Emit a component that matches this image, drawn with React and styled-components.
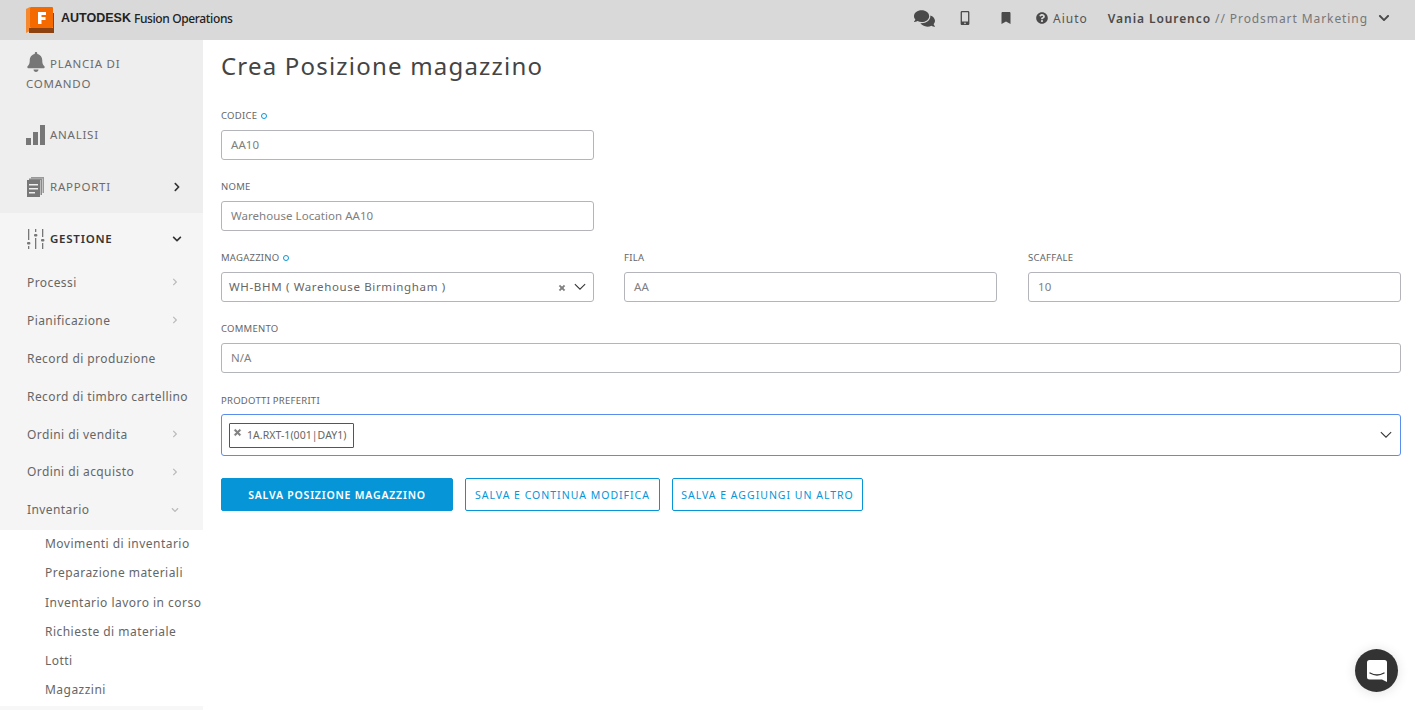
import React from 'react';
import styled, { createGlobalStyle } from 'styled-components';
import { FaBell, FaComments, FaMobileAlt, FaBookmark, FaQuestionCircle, FaChevronRight, FaChevronDown, FaTimes } from 'react-icons/fa';

const GlobalStyle = createGlobalStyle`
  html, body { margin: 0; height: 100%; overflow: hidden; background: #fff; }
  * { box-sizing: border-box; }
  body { font-family: "Noto Sans", "Open Sans", sans-serif; color: #666; }
`;

const Page = styled.div`
  height: 710px;
  display: flex;
  flex-direction: column;
  position: relative;
  overflow: hidden;
`;

const Header = styled.header`
  height: 40px;
  flex: none;
  background: #d9d9d9;
  display: flex;
  align-items: center;
  padding: 0 25px 4px 26px;
`;

const Brand = styled.div`
  display: flex;
  align-items: center;
  gap: 7px;
  color: #222;
  white-space: nowrap;
  flex: 1;
  svg { margin-top: 4px; }
`;

const BrandBold = styled.span`
  font-family: "Liberation Sans", sans-serif;
  font-size: 12.5px;
  font-weight: 700;
`;

const BrandLight = styled.span`
  font-size: 12px;
  font-weight: 500;
  margin-left: -4px;
  letter-spacing: -0.37px;
`;

const TopIcon = styled.span`
  display: flex;
  color: #4a4a4a;
  font-size: ${(p) => p.$size || 14}px;
  margin-right: ${(p) => p.$gap || 0}px;
`;

const Help = styled.span`
  display: flex;
  align-items: center;
  gap: 5px;
  font-size: 12px;
  letter-spacing: 1px;
  color: #555;
  margin-right: 20px;
`;

const User = styled.span`
  font-size: 12px;
  letter-spacing: 0.92px;
  color: #777;
  margin-right: 10px;
  b { color: #4a4a4a; font-weight: 600; }
`;

const Body = styled.div`
  flex: 1;
  display: flex;
  min-height: 0;
`;

const Sidebar = styled.nav`
  width: 203px;
  flex: none;
  display: flex;
  flex-direction: column;
  background: #f7f7f7;
`;

const TopItem = styled.div`
  height: ${(p) => p.$height}px;
  background: ${(p) => (p.$open ? '#f5f5f5' : '#eeeeee')};
  display: flex;
  align-items: center;
  padding: 0 21px 0 26px;
  gap: 4px;
  font-size: 11.5px;
  letter-spacing: 0.75px;
  color: ${(p) => (p.$open ? '#333' : '#6b6b6b')};
  font-weight: ${(p) => (p.$open ? 600 : 400)};
  svg { flex: none; }
`;

const Grow = styled.span`
  flex: 1;
`;

const Plancia = styled.div`
  height: 69px;
  background: #eeeeee;
  padding: 12px 26px 0;
  font-size: 11.5px;
  line-height: 20px;
  letter-spacing: 0.75px;
  color: #6b6b6b;
  svg { vertical-align: -4px; margin-right: 4px; color: #777; }
`;

const Arrow = styled.span`
  display: flex;
  font-size: ${(p) => p.$size || 10}px;
  color: ${(p) => p.$color || '#333'};
`;

const SubItem = styled.div`
  height: ${(p) => p.$height || 38}px;
  flex: none;
  background: #f5f5f5;
  display: flex;
  align-items: center;
  padding: 0 24px 2px 27px;
  font-size: 12px;
  letter-spacing: 0.42px;
  color: #666;
  white-space: nowrap;
`;

const LeafList = styled.div`
  display: flex;
  flex-direction: column;
  padding-left: 45px;
  background: #fff;
`;

const Leaf = styled.div`
  height: 29.3px;
  line-height: 27.3px;
  font-size: 12px;
  letter-spacing: 0.47px;
  color: #666;
  white-space: nowrap;
`;

const Main = styled.main`
  flex: 1;
  padding: 0 14px 0 18px;
`;

const Title = styled.h1`
  margin: 0;
  height: 68px;
  padding-top: 8px;
  font-size: 24px;
  line-height: 36px;
  font-weight: 400;
  letter-spacing: 1.2px;
  color: #444;
`;

const Row = styled.div`
  display: grid;
  grid-template-columns: ${(p) => (p.$cols === 3 ? '403px 404px 373px' : p.$cols === 'one' ? '373px' : '1fr')};
  & > * { max-width: ${(p) => (p.$cols === 3 ? '373px' : 'none')}; }
`;

const Field = styled.div`
  display: flex;
  flex-direction: column;
  margin-bottom: ${(p) => p.$gap || 19}px;
`;

const Label = styled.label`
  height: 22px;
  line-height: 15px;
  font-size: 9.5px;
  color: #666;
  letter-spacing: 0.25px;
  display: flex;
  gap: 4px;
  align-items: flex-start;
`;

const Required = styled.i`
  width: 6px;
  height: 6px;
  margin-top: 5px;
  border: 1.5px solid #0696d7;
  border-radius: 50%;
`;

const Input = styled.div`
  height: 30px;
  border: 1px solid #b4b4bb;
  border-radius: 3px;
  display: flex;
  align-items: center;
  padding: 0 9px 2px;
  font-size: 11.5px;
  letter-spacing: 0.05px;
  color: #808080;
  background: #fff;
`;

const SelectBox = styled(Input)`
  padding: 0 7px 2px 7px;
  letter-spacing: 0.65px;
  color: #666;
`;

const Clear = styled.span`
  display: flex;
  font-size: 8px;
  color: #808080;
  margin: 4px 8px 0 0;
  svg { stroke: #808080; stroke-width: 40; }
`;

const CaretSlot = styled.span`
  display: flex;
  margin-top: 2px;
`;

const MultiBox = styled.div`
  height: 42px;
  border: 1px solid #5b8def;
  border-radius: 3px;
  display: flex;
  align-items: center;
  justify-content: space-between;
  padding: 0 8px 0 7px;
  margin-top: -1px;
`;

const Tag = styled.span`
  height: 25px;
  border: 1px solid #555;
  border-radius: 1px;
  display: flex;
  align-items: center;
  padding: 0 6px 0 3px;
  gap: 5px;
  font-size: 10.5px;
  letter-spacing: 0.05px;
  color: #666;
  svg { margin-top: -6px; font-size: 9px; color: #808080; stroke: #808080; stroke-width: 40; }
`;

const Actions = styled.div`
  display: flex;
  gap: 12px;
  margin-top: 3px;
`;

const Button = styled.button`
  height: 33px;
  width: ${(p) => p.$width}px;
  padding: 0;
  border: 1px solid #0696d7;
  border-radius: 2px;
  background: ${(p) => (p.$primary ? '#0696d7' : '#fff')};
  color: ${(p) => (p.$primary ? '#fff' : '#0696d7')};
  font-family: inherit;
  font-size: 10.5px;
  font-weight: ${(p) => (p.$primary ? 600 : 400)};
  letter-spacing: ${(p) => (p.$primary ? 0.8 : 1)}px;
  white-space: nowrap;
`;

const Chat = styled.div`
  position: absolute;
  right: 17px;
  bottom: 18px;
  width: 43px;
  height: 43px;
  border-radius: 50%;
  background: #333;
  display: flex;
  align-items: center;
  justify-content: center;
  box-shadow: 0 1px 12px rgba(0, 0, 0, 0.12);
`;

const Logo = () => (
  <svg width="28" height="27" viewBox="0 0 28 27">
    <path d="M0 2 L4 0 L4 24 L0 26 Z" fill="#f4892f" />
    <path d="M3 21 H27 V6 H28 V26 H3 Z" fill="#8f4211" />
    <rect x="4" y="0" width="23" height="21" rx="1" fill="#f56a00" />
    <path d="M12 5 H20 V8 H15.5 V10 H19.5 V13 H15.5 V17 H12 Z" fill="#fff" />
  </svg>
);

const BarsIcon = () => (
  <svg width="20" height="20" viewBox="0 0 20 20" fill="#777">
    <rect x="0" y="13" width="5" height="7" />
    <rect x="7" y="7" width="5" height="13" />
    <rect x="14" y="0" width="5" height="20" />
  </svg>
);

const ReportIcon = () => (
  <svg width="20" height="20" viewBox="0 0 20 20">
    <path d="M5 0 H18 V16 H16.5 V1.5 H5 Z" fill="#999" />
    <path d="M3 1.5 H16 V18 H14.5 V3 H3 Z" fill="#8a8a8a" />
    <rect x="1" y="3" width="13" height="17" fill="#777" />
    <rect x="3" y="7" width="9" height="1.5" fill="#eee" />
    <rect x="3" y="11" width="9" height="1.5" fill="#eee" />
    <rect x="3" y="15" width="6" height="1.5" fill="#eee" />
  </svg>
);

const SlidersIcon = () => (
  <svg width="20" height="20" viewBox="0 0 20 20" fill="#777">
    <rect x="2" y="0" width="1.3" height="11" />
    <rect x="1" y="13" width="3.4" height="2.4" rx="1" />
    <rect x="2" y="17" width="1.3" height="3" />
    <rect x="9" y="0" width="1.3" height="3" />
    <rect x="8" y="5" width="3.4" height="2.4" rx="1" />
    <rect x="9" y="9" width="1.3" height="11" />
    <rect x="16" y="0" width="1.3" height="8" />
    <rect x="15" y="10" width="3.4" height="2.4" rx="1" />
    <rect x="16" y="14" width="1.3" height="6" />
  </svg>
);

const Caret = ({ size = 12 }) => (
  <svg width={size} height={size * 0.6} viewBox="0 0 14 8" fill="none" stroke="#333" strokeWidth="1.2">
    <path d="M1 1 L7 7 L13 1" />
  </svg>
);

const ChatIcon = () => (
  <svg width="20" height="22" viewBox="0 0 20 22">
    <path d="M2.5 0 H17.5 A2.5 2.5 0 0 1 20 2.5 V22 L15 19.5 H2.5 A2.5 2.5 0 0 1 0 17 V2.5 A2.5 2.5 0 0 1 2.5 0 Z" fill="#fff" />
    <path d="M3 13 Q10 17 17 13" fill="none" stroke="#333" strokeWidth="1.4" strokeLinecap="round" />
  </svg>
);

const subItems = [
  { label: 'Processi', arrow: true },
  { label: 'Pianificazione', arrow: true },
  { label: 'Record di produzione' },
  { label: 'Record di timbro cartellino' },
  { label: 'Ordini di vendita', arrow: true },
  { label: 'Ordini di acquisto', arrow: true, height: 37 },
];

const leaves = ['Movimenti di inventario', 'Preparazione materiali', 'Inventario lavoro in corso', 'Richieste di materiale', 'Lotti', 'Magazzini'];

export default function App() {
  return (
    <Page>
      <GlobalStyle />
      <Header>
        <Brand>
          <Logo />
          <BrandBold>AUTODESK</BrandBold>
          <BrandLight>Fusion Operations</BrandLight>
        </Brand>
        <TopIcon $size={21} $gap={23}><FaComments /></TopIcon>
        <TopIcon $size={14} $gap={28}><FaMobileAlt /></TopIcon>
        <TopIcon $size={12} $gap={24}><FaBookmark /></TopIcon>
        <Help><FaQuestionCircle size={12} color="#4a4a4a" /> Aiuto</Help>
        <User><b>Vania Lourenco</b> // Prodsmart Marketing</User>
        <Arrow $size={12} $color="#4a4a4a"><FaChevronDown /></Arrow>
      </Header>
      <Body>
        <Sidebar>
          <Plancia><FaBell size={20} />PLANCIA DI COMANDO</Plancia>
          <TopItem $height={51}><BarsIcon /><Grow>ANALISI</Grow></TopItem>
          <TopItem $height={53}><ReportIcon /><Grow>RAPPORTI</Grow><Arrow><FaChevronRight /></Arrow></TopItem>
          <TopItem $height={51} $open><SlidersIcon /><Grow>GESTIONE</Grow><Arrow><FaChevronDown /></Arrow></TopItem>
          {subItems.map((item) => (
            <SubItem key={item.label} $height={item.height}>
              <Grow>{item.label}</Grow>
              {item.arrow && <Arrow $size={8} $color="#bbb"><FaChevronRight /></Arrow>}
            </SubItem>
          ))}
          <SubItem $height={39}><Grow>Inventario</Grow><Arrow $size={8} $color="#bbb"><FaChevronDown /></Arrow></SubItem>
          <LeafList>
            {leaves.map((leaf) => <Leaf key={leaf}>{leaf}</Leaf>)}
          </LeafList>
        </Sidebar>
        <Main>
          <Title>Crea Posizione magazzino</Title>
          <Row $cols="one">
            <Field><Label>CODICE <Required /></Label><Input>AA10</Input></Field>
          </Row>
          <Row $cols="one">
            <Field><Label>NOME</Label><Input>Warehouse Location AA10</Input></Field>
          </Row>
          <Row $cols={3}>
            <Field>
              <Label>MAGAZZINO <Required /></Label>
              <SelectBox>
                <Grow>WH-BHM ( Warehouse Birmingham )</Grow>
                <Clear><FaTimes /></Clear>
                <CaretSlot><Caret /></CaretSlot>
              </SelectBox>
            </Field>
            <Field><Label>FILA</Label><Input>AA</Input></Field>
            <Field><Label>SCAFFALE</Label><Input>10</Input></Field>
          </Row>
          <Row>
            <Field $gap={20}><Label>COMMENTO</Label><Input>N/A</Input></Field>
          </Row>
          <Row>
            <Field>
              <Label>PRODOTTI PREFERITI</Label>
              <MultiBox>
                <Tag><FaTimes />1A.RXT-1(001|DAY1)</Tag>
                <Caret />
              </MultiBox>
            </Field>
          </Row>
          <Actions>
            <Button $primary $width={232}>SALVA POSIZIONE MAGAZZINO</Button>
            <Button $width={195}>SALVA E CONTINUA MODIFICA</Button>
            <Button $width={191}>SALVA E AGGIUNGI UN ALTRO</Button>
          </Actions>
        </Main>
      </Body>
      <Chat><ChatIcon /></Chat>
    </Page>
  );
}
